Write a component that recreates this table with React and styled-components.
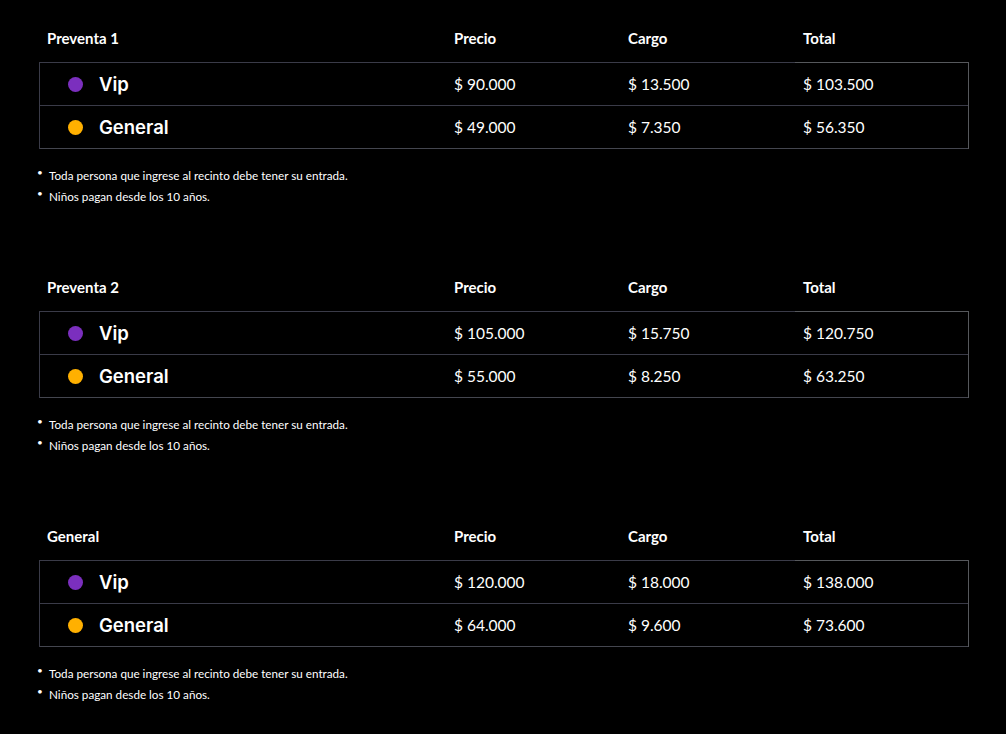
import React from 'react';
import styled, { createGlobalStyle } from 'styled-components';

const GlobalStyle = createGlobalStyle`
  html, body {
    margin: 0;
    padding: 0;
    background: #000;
  }
  body {
    font-family: Lato, "Liberation Sans", sans-serif;
    color: #fff;
  }
`;

const Page = styled.div`
  padding: 14px 37px 0 39px;
  width: 930px;
`;

const Section = styled.section`
  margin-bottom: 57px;

  &:last-child {
    margin-bottom: 0;
  }
`;

const HeaderRow = styled.div`
  display: grid;
  grid-template-columns: 407px 174px 175px 174px;
  height: 49px;
`;

const HeaderCell = styled.div`
  display: flex;
  align-items: center;
  padding: 0 8px 1px;
  font-weight: 700;
  font-size: 15px;
  box-sizing: border-box;
  border-bottom: 1px solid ${p => (p.$light ? '#56585c' : '#3a3b48')};
`;

const Body = styled.div`
  border-left: 1px solid #3a3b48;
  border-right: 1px solid #56585c;
`;

const Row = styled.div`
  display: grid;
  grid-template-columns: 406px 174px 175px 173px;
  height: 43px;
  box-sizing: border-box;
  border-bottom: 1px solid #3a3b48;

  &:last-child {
    border-bottom-color: #44464f;
  }
`;

const Cell = styled.div`
  display: flex;
  align-items: center;
  padding: 0 8px;
  font-size: 15.5px;
`;

const NameCell = styled.div`
  display: flex;
  align-items: center;
  padding-left: 28px;
  gap: 16px;
  font-family: Inter, "Liberation Sans", sans-serif;
  font-weight: 600;
  font-size: 18.5px;
`;

const Dot = styled.span`
  width: 15px;
  height: 15px;
  border-radius: 50%;
  background: ${p => p.$color};
`;

const Notes = styled.ul`
  list-style: none;
  margin: 15px 0 0;
  padding: 0;
  font-size: 11.7px;
`;

const Note = styled.li`
  display: flex;
  align-items: center;
  height: 21px;

  &::before {
    content: '•';
    width: 12px;
    font-size: 10px;
    margin-top: -5px;
    margin-left: -2px;
  }
`;

const tables = [
  {
    title: 'Preventa 1',
    rows: [
      ['Vip', '#7b2fbe', '$ 90.000', '$ 13.500', '$ 103.500'],
      ['General', '#ffb000', '$ 49.000', '$ 7.350', '$ 56.350'],
    ],
  },
  {
    title: 'Preventa 2',
    rows: [
      ['Vip', '#7b2fbe', '$ 105.000', '$ 15.750', '$ 120.750'],
      ['General', '#ffb000', '$ 55.000', '$ 8.250', '$ 63.250'],
    ],
  },
  {
    title: 'General',
    rows: [
      ['Vip', '#7b2fbe', '$ 120.000', '$ 18.000', '$ 138.000'],
      ['General', '#ffb000', '$ 64.000', '$ 9.600', '$ 73.600'],
    ],
  },
];

function PriceTable({ title, rows }) {
  return (
    <Section>
      <HeaderRow>
        <HeaderCell>{title}</HeaderCell>
        <HeaderCell>Precio</HeaderCell>
        <HeaderCell>Cargo</HeaderCell>
        <HeaderCell $light>Total</HeaderCell>
      </HeaderRow>
      <Body>
        {rows.map(([name, color, precio, cargo, total]) => (
          <Row key={name}>
            <NameCell>
              <Dot $color={color} />
              {name}
            </NameCell>
            <Cell>{precio}</Cell>
            <Cell>{cargo}</Cell>
            <Cell>{total}</Cell>
          </Row>
        ))}
      </Body>
      <Notes>
        <Note>Toda persona que ingrese al recinto debe tener su entrada.</Note>
        <Note>Niños pagan desde los 10 años.</Note>
      </Notes>
    </Section>
  );
}

export default function App() {
  return (
    <>
      <GlobalStyle />
      <Page>
        {tables.map(t => (
          <PriceTable key={t.title} {...t} />
        ))}
      </Page>
    </>
  );
}
